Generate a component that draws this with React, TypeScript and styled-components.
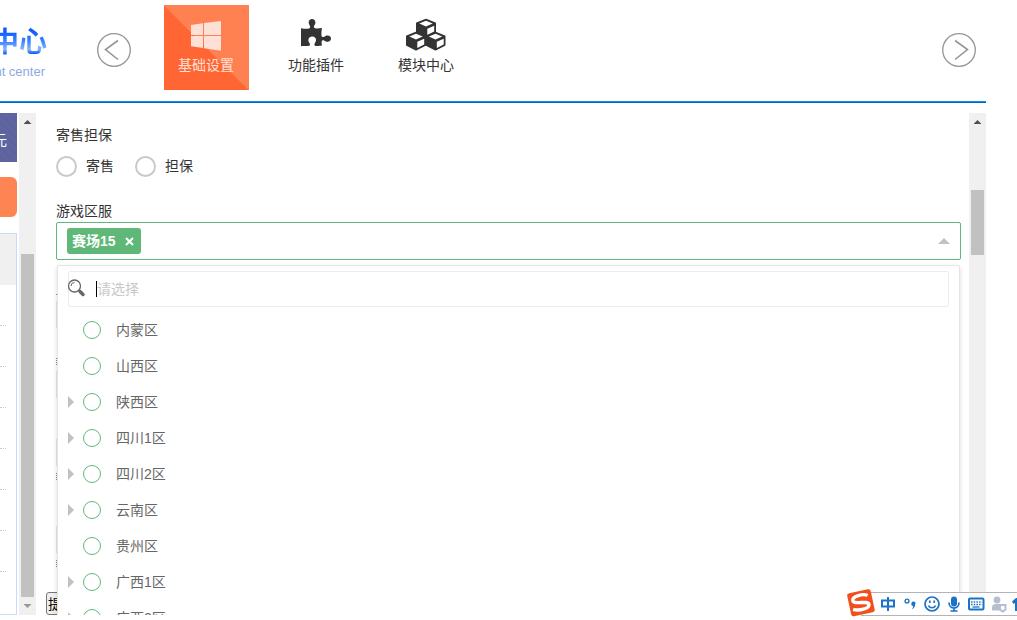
import React from "react";
import styled, { createGlobalStyle } from "styled-components";

const GlobalStyle = createGlobalStyle`
  * { box-sizing: border-box; }
  body {
    margin: 0;
    background: #fff;
    color: #333;
    font-family: "Liberation Sans", "Noto Sans CJK SC", sans-serif;
    font-size: 14px;
    line-height: 20px;
    overflow: hidden;
  }
  button, input { font: inherit; }
`;

const Page = styled.div`
  display: flex;
  flex-direction: column;
  height: 100vh;
  padding: 0 31px 5px 0;
`;

const Header = styled.header`
  display: flex;
  align-items: flex-start;
  height: 102px;
  flex: none;
  border-bottom: 1px solid #0a94f5;
  box-shadow: 0 1px 0 #0a62b4;
`;

const Logo = styled.a`
  display: flex;
  flex-direction: column;
  align-items: flex-end;
  width: 47px;
  padding-top: 27px;
  overflow: hidden;
  white-space: nowrap;
  text-decoration: none;
`;

const LogoName = styled.span`
  font-size: 28px;
  line-height: 32px;
  font-weight: 700;
  color: transparent;
  background: linear-gradient(#0f5cff 15%, #3d86ff 45%, #8ab4fb 70%, #1565f5 82%);
  background-clip: text;
`;

const LogoSub = styled.span`
  padding: 3px 2px 0 0;
  font-size: 13px;
  color: #8fa9e0;
`;

const RoundButton = styled.button`
  display: block;
  width: 34px;
  height: 34px;
  margin-top: 33px;
  padding: 0;
  border: 0;
  background: none;
  svg { display: block; }
`;

const PrevButton = styled(RoundButton)`
  margin-left: 50px;
`;

const NextButton = styled(RoundButton)`
  margin-right: 10px;
`;

const Nav = styled.nav`
  display: flex;
  flex: 1;
  gap: 25px;
  padding: 5px 0 0 33px;
`;

const NavItem = styled.a<{ $active?: boolean }>`
  display: flex;
  flex-direction: column;
  align-items: center;
  width: 85px;
  height: 85px;
  padding: 10px 1px 0 0;
  text-decoration: none;
  color: ${(p) => (p.$active ? "#ffe0d6" : "#333")};
  background: ${(p) => (p.$active ? "linear-gradient(45deg, #ff6633 50%, #ff8050 50%)" : "none")};
  svg { display: block; margin-bottom: 2px; }
`;

const Main = styled.div`
  display: flex;
  flex: 1;
  min-height: 0;
  margin-top: 11px;
`;

const Sidebar = styled.aside`
  display: flex;
  flex-direction: column;
  width: 17px;
  margin-right: 2px;
  overflow: hidden;
`;

const Balance = styled.div`
  display: flex;
  justify-content: flex-end;
  align-items: center;
  height: 49px;
  padding: 4px 10px 0 0;
  color: #fff;
  background: repeating-linear-gradient(45deg, #5c66a2 0 3px, #62619c 3px 6px);
`;

const SideAction = styled.button`
  height: 40px;
  margin: 15px 0 16px;
  border: 0;
  border-radius: 0 6px 6px 0;
  background: #ff8454;
`;

const SideList = styled.ul`
  flex: 1;
  margin: 0;
  padding: 0;
  list-style: none;
  overflow: hidden;
  border: 1px solid #ccd9ff;
  border-left: 0;
`;

const SideRow = styled.li<{ $current?: boolean }>`
  height: ${(p) => (p.$current ? 51 : 41)}px;
  background: ${(p) => (p.$current ? "#f0f0f0" : "none")};
  &::after {
    content: "";
    display: ${(p) => (p.$current ? "none" : "block")};
    width: 6px;
    padding-top: 40px;
    border-bottom: 1px dotted #ccc;
  }
`;

const Scrollbar = styled.div`
  display: flex;
  flex-direction: column;
  align-items: center;
  justify-content: space-between;
  width: 17px;
  flex: none;
  background: #f0f0f0;
`;

const ScrollArrow = styled.span<{ $down?: boolean }>`
  width: 8px;
  height: 4px;
  margin: 7px 0;
  background: ${(p) => (p.$down ? "#999" : "#505050")};
  clip-path: ${(p) => (p.$down ? "polygon(0 0, 100% 0, 50% 100%)" : "polygon(50% 0, 100% 100%, 0 100%)")};
`;

const Thumb = styled.span<{ $start: number; $length?: number }>`
  width: 13px;
  margin-top: ${(p) => p.$start}px;
  background: #c1c1c1;
  ${(p) => (p.$length ? `height: ${p.$length}px; margin-bottom: auto;` : "flex: 1;")}
`;

const Content = styled.main`
  position: relative;
  flex: 1;
  min-width: 0;
  padding: 12px 8px 0 20px;
  overflow: hidden;
`;

const RadioGroup = styled.fieldset`
  display: flex;
  flex-wrap: wrap;
  gap: 21px;
  margin: 0;
  padding: 0;
  border: 0;
`;

const Legend = styled.legend`
  padding: 0;
  margin-bottom: 10px;
`;

const RadioLabel = styled.label`
  display: flex;
  align-items: center;
  gap: 9px;
  height: 22px;
`;

const Radio = styled.input`
  appearance: none;
  width: 21px;
  height: 21px;
  margin: 0;
  border: 2px solid #c9c9c9;
  border-radius: 50%;
  background: #fff;
`;

const FieldLabel = styled.div`
  margin-top: 24px;
`;

const SelectWrap = styled.div`
  position: relative;
  margin-top: 1px;
`;

const SelectBox = styled.div`
  display: flex;
  align-items: center;
  justify-content: space-between;
  height: 38px;
  padding: 0 10px;
  border: 1px solid #5fb878;
  border-radius: 2px;
  background: #fff;
`;

const Tag = styled.span`
  display: flex;
  align-items: center;
  gap: 9px;
  height: 26px;
  padding: 0 7px 0 5px;
  border-radius: 3px;
  color: #fff;
  font-weight: 700;
  background: #5fb878;
`;

const TagClose = styled.button`
  display: block;
  padding: 0;
  border: 0;
  background: none;
  svg { display: block; }
`;

const OpenMark = styled.span`
  width: 12px;
  height: 6px;
  background: #c2c2c2;
  clip-path: polygon(50% 0, 100% 100%, 0 100%);
`;

const Dropdown = styled.div`
  position: absolute;
  z-index: 2;
  top: 43px;
  left: 1px;
  right: 1px;
  padding: 5px 10px;
  border: 1px solid #e4e4e4;
  border-radius: 2px;
  background: #fff;
  box-shadow: 0 2px 5px rgba(0, 0, 0, 0.14);
`;

const SearchBox = styled.label`
  display: flex;
  align-items: center;
  height: 36px;
  border: 1px solid #ececec;
  border-radius: 2px;
  svg { display: block; flex: none; margin-right: 10px; overflow: visible; }
`;

const TextCaret = styled.span`
  width: 1px;
  height: 16px;
  background: #000;
`;

const SearchInput = styled.input`
  flex: 1;
  min-width: 0;
  padding: 0;
  border: 0;
  outline: 0;
  background: none;
  &::placeholder { color: #c8c8c8; opacity: 1; }
`;

const Tree = styled.ul`
  margin: 5px 0 0;
  padding: 0;
  list-style: none;
`;

const TreeRow = styled.li`
  display: flex;
  align-items: center;
  height: 36px;
  color: #666;
`;

const Expander = styled.span<{ $shown: boolean }>`
  width: 6px;
  height: 12px;
  margin-right: 9px;
  background: #c2c2c2;
  clip-path: polygon(0 0, 100% 50%, 0 100%);
  visibility: ${(p) => (p.$shown ? "visible" : "hidden")};
`;

const TreeLabel = styled.label`
  display: flex;
  align-items: center;
  gap: 15px;
`;

const TreeRadio = styled(Radio)`
  width: 18px;
  height: 18px;
  border: 1px solid #5fb878;
`;

const CoveredFields = styled.div`
  display: flex;
  flex-direction: column;
  padding: 34px 20px 0 0;
`;

const CoveredLabel = styled.div<{ $tall?: boolean }>`
  height: ${(p) => (p.$tall ? 7 : 1)}px;
  border-left: 1px dotted #888;
`;

const CoveredInput = styled.div<{ $gap: number }>`
  height: 27px;
  margin: ${(p) => p.$gap}px 0 0;
  border: 1px solid #e6e6e6;
  & + ${CoveredLabel} { margin-top: 30px; }
  & + ${CoveredLabel}.near { margin-top: 7px; }
`;

const Submit = styled.button`
  position: absolute;
  left: 10px;
  bottom: 0;
  height: 23px;
  padding: 0 1px;
  border: 1px solid #767676;
  border-radius: 3px;
  color: #000;
  background: #efefef;
`;

const ImeBar = styled.div`
  position: fixed;
  z-index: 5;
  right: 0;
  bottom: 4px;
  display: flex;
  align-items: center;
  width: 156px;
  height: 24px;
  border: solid #b4b4b8;
  border-width: 1px 0;
  background: #fff;
  svg { display: block; flex: none; overflow: visible; }
`;

const regions = [
  { name: "内蒙区", open: false },
  { name: "山西区", open: false },
  { name: "陕西区", open: true },
  { name: "四川1区", open: true },
  { name: "四川2区", open: true },
  { name: "云南区", open: true },
  { name: "贵州区", open: false },
  { name: "广西1区", open: true },
  { name: "广西2区", open: true },
];

function Arrow({ next }: { next?: boolean }) {
  return (
    <svg width="34" height="34" viewBox="0 0 34 34" fill="none" stroke="#959595">
      <circle cx="17" cy="17" r="16.3" strokeWidth="1.3" />
      <path d={next ? "M13 7.500 25.500 16.500 13 26.500" : "M21 7.500 8.500 16.500 21 26.500"} strokeWidth="1.600" />
    </svg>
  );
}

function WindowsIcon() {
  return (
    <svg width="42" height="38" viewBox="0 0 42 38" fill="#ffe0d6">
      <path d="M6 10 18 8.300V20H6zM19 8.100 36 6v14H19zM6 21h12v11.900L6 31.200zM19 21h17v14.800l-17-2.600z" />
    </svg>
  );
}

function PuzzleIcon() {
  return (
    <svg width="42" height="38" viewBox="0 0 42 38" fill="#333">
      <path d="M6 13.200c3 .6 6 .8 8 .3 1.400-.5 1.300-1.800.7-2.900-.6-1-1-1.900-1-3C13.700 5.300 15 4 17 4s3.400 1.300 3.400 3.400c0 1.300-.6 2.200-1.200 3.200-.6 1.200-.5 2.400.9 2.700 2 .4 4.600 0 6.800-.3-.3 3-.8 6-.3 8 .4 1.300 1.600 1.300 2.700.7 1-.6 2-1.200 3.300-1.200 2.200 0 3.400 1.400 3.400 3s-1.300 3.300-3.400 3.300c-1.300 0-2.200-.5-3.100-1.100-1.300-.8-2.500-.5-2.800.8-.3 1.200 0 2.800.3 4-2 .3-5 .7-6.500.4-1.300-.3-1.400-1.500-.6-2.800.6-1 1.100-1.800 1.100-3 0-2.200-1.500-3.500-3.700-3.500-2.300 0-3.900 1.400-3.900 3.600 0 1.300.6 2.100 1.200 3 .7 1.200.6 2.300-.7 2.600-1.500.4-5.300-.1-7.900.4z" />
    </svg>
  );
}

function Cube({ x, y }: { x: number; y: number }) {
  return (
    <g transform={`translate(${x} ${y})`}>
      <path d="M10 .9 19.300 4.700v9L10 18.400.7 13.700v-9z" fill="#333" stroke="#333" strokeWidth="1.400" strokeLinejoin="round" />
      <path d="M10 2.300 16.700 5.100 10 8 3.300 5.100zM11.300 10.300 18.200 7.200v5.700l-6.900 3.500z" fill="#fff" />
    </g>
  );
}

function CubesIcon() {
  return (
    <svg width="42" height="38" viewBox="0 0 42 38">
      <Cube x={11} y={3.5} />
      <Cube x={1} y={16.5} />
      <Cube x={20.5} y={16.5} />
    </svg>
  );
}

function SearchIcon() {
  return (
    <svg width="17" height="18" viewBox="1 1 17 18" fill="none" stroke="#666">
      <circle cx="6.500" cy="7" r="6" strokeWidth="1.300" />
      <path d="M3 7a3.500 3.500 0 0 1 3.500-3.500" strokeWidth="1" />
      <path d="m10.800 11.300 1.400 1.300" strokeWidth="1.500" />
      <path d="m12 12.500 3 3" strokeWidth="3.400" strokeLinecap="round" />
    </svg>
  );
}

function ImeIcons() {
  return (
    <svg width="156" height="22" viewBox="0 0 156 22" fill="none" stroke="#1c72c4" strokeWidth="2">
      <g transform="rotate(-12 0 10)">
        <rect x="-12" y="-2" width="24" height="23.500" rx="2.500" fill="#f0501e" stroke="none" />
        <path d="M8 4C4 1-7.500 1.500-7.500 6 -7.500 10.500 7.500 8.500 7.500 13 7.500 17.500-4 17.500-9 14.500" stroke="#fff" strokeWidth="3.400" />
      </g>
      <path d="M21 7.500h12v6H21zM27 4v14" />
      <circle cx="46" cy="8" r="1.900" strokeWidth="1.400" />
      <path d="M50.500 10.300a2 2 0 1 1 3.600 1.300c0 2.200-1.200 3.800-3.200 4.700.9-1.400 1.300-2.300 1.100-3.300a2 2 0 0 1-1.500-2.700z" fill="#1c72c4" stroke="none" />
      <circle cx="71" cy="11" r="7" strokeWidth="1.700" />
      <path d="M67.500 12.500c1 3 6 3 7 0" strokeWidth="1.400" />
      <path d="M68.800 7.500v2.500M73.200 7.500v2.500" strokeWidth="1.700" />
      <rect x="90" y="3.500" width="6" height="10" rx="3" fill="#1c72c4" stroke="none" />
      <path d="M88 9.500c0 7.300 10 7.300 10 0M93 15v3.500M89.500 18h7" strokeWidth="1.700" />
      <rect x="108" y="5.500" width="14.500" height="11" rx="1" strokeWidth="2" />
      <path d="M110 9h11M110 11.500h11" strokeWidth="1.400" strokeDasharray="1.500 1.200" />
      <path d="M111.500 14h7" strokeWidth="1.300" />
      <g fill="#b5bfd1" stroke="none">
        <circle cx="136" cy="7" r="3.400" />
        <path d="M131 17.500v-3c0-2.500 1.600-3.500 4-3.500h2c1.200 0 2 .3 2.800 1H138v5.500z" />
        <path d="M139 12h5.500v4.500L142 18.500 139 17z" fill="#fff" stroke="#b5bfd1" />
      </g>
      <path d="m151 8.500 4-3.500h3v13h-4v-8l-1.500 1z" fill="#1c72c4" stroke="none" />
    </svg>
  );
}

export default function App() {
  return (
    <>
      <GlobalStyle />
      <Page>
        <Header>
          <Logo href="#">
            <LogoName>中心</LogoName>
            <LogoSub>nt center</LogoSub>
          </Logo>
          <PrevButton aria-label="上一页"><Arrow /></PrevButton>
          <Nav>
            <NavItem href="#" $active><WindowsIcon />基础设置</NavItem>
            <NavItem href="#"><PuzzleIcon />功能插件</NavItem>
            <NavItem href="#"><CubesIcon />模块中心</NavItem>
          </Nav>
          <NextButton aria-label="下一页"><Arrow next /></NextButton>
        </Header>
        <Main>
          <Sidebar>
            <Balance>元</Balance>
            <SideAction aria-label="操作" />
            <SideList>
              <SideRow $current />
              {Array.from({ length: 7 }, (_, i) => <SideRow key={i} />)}
            </SideList>
          </Sidebar>
          <Scrollbar>
            <ScrollArrow />
            <Thumb $start={123} />
            <ScrollArrow $down />
          </Scrollbar>
          <Content>
            <RadioGroup>
              <Legend>寄售担保</Legend>
              <RadioLabel><Radio type="radio" name="trade" />寄售</RadioLabel>
              <RadioLabel><Radio type="radio" name="trade" />担保</RadioLabel>
            </RadioGroup>
            <FieldLabel id="region-label">游戏区服</FieldLabel>
            <SelectWrap>
              <SelectBox role="group" aria-labelledby="region-label">
                <Tag>
                  赛场15
                  <TagClose aria-label="移除">
                    <svg width="9" height="9" viewBox="0 0 9 9" stroke="#fff" strokeWidth="2"><path d="m1 1 7 7M8 1 1 8" /></svg>
                  </TagClose>
                </Tag>
                <OpenMark />
              </SelectBox>
              <Dropdown>
                <SearchBox>
                  <SearchIcon />
                  <TextCaret />
                  <SearchInput type="text" placeholder="请选择" aria-label="搜索" />
                </SearchBox>
                <Tree>
                  {regions.map((r) => (
                    <TreeRow key={r.name}>
                      <Expander $shown={r.open} />
                      <TreeLabel><TreeRadio type="radio" name="region" />{r.name}</TreeLabel>
                    </TreeRow>
                  ))}
                </Tree>
              </Dropdown>
            </SelectWrap>
            <CoveredFields>
              <CoveredLabel />
              <CoveredInput $gap={6} />
              <CoveredLabel $tall />
              <CoveredInput $gap={6} />
              <CoveredInput $gap={41} />
              <CoveredLabel $tall className="near" />
              <CoveredInput $gap={46} />
              <CoveredLabel $tall className="near" />
            </CoveredFields>
            <Submit>提交</Submit>
          </Content>
          <Scrollbar>
            <ScrollArrow />
            <Thumb $start={59} $length={65} />
          </Scrollbar>
        </Main>
      </Page>
      <ImeBar><ImeIcons /></ImeBar>
    </>
  );
}
